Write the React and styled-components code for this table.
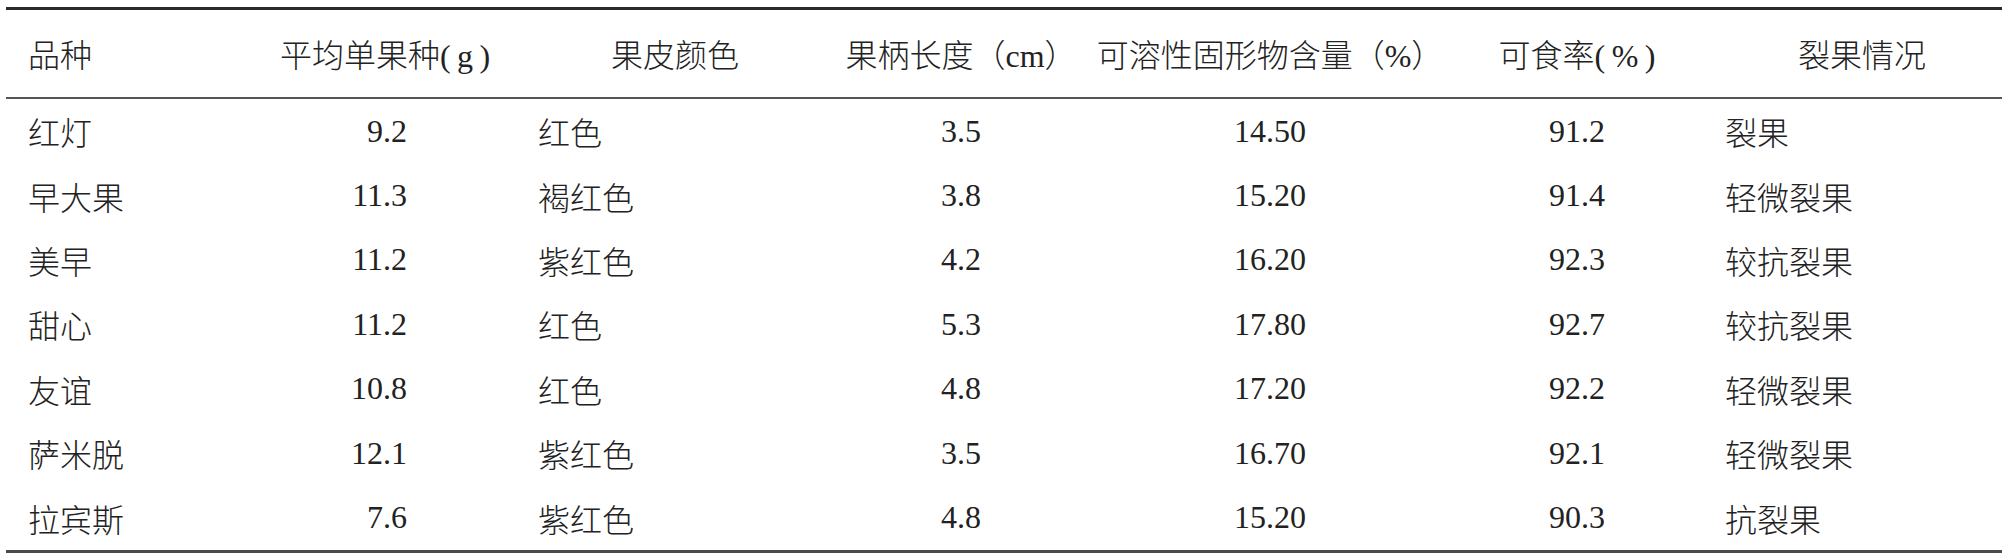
import React from 'react';
import styled, { createGlobalStyle } from 'styled-components';

const GlobalStyle = createGlobalStyle`
  html, body {
    margin: 0;
    padding: 0;
    background: #ffffff;
  }
  body {
    font-family: "Liberation Serif", "Noto Sans CJK SC", serif;
    color: #222222;
  }
`;

const COLS = '244px 270px 310px 262px 356px 258px 296px';

const Sheet = styled.div`
  width: 1996px;
  margin: 7px 0 0 6px;
  border-top: 3px solid #2a2a2a;
  border-bottom: 3px solid #4a4a4a;
`;

const Row = styled.div`
  display: grid;
  grid-template-columns: ${COLS};
  height: ${props => (props.$head ? '85px' : '64.4px')};
  padding-bottom: ${props => (props.$head ? '2px' : '0')};
  border-bottom: ${props => (props.$head ? '2px solid #555555' : 'none')};
`;

const justify = { left: 'flex-start', center: 'center', right: 'flex-end' };

const Cell = styled.div`
  display: flex;
  align-items: center;
  justify-content: ${props => justify[props.$align]};
  padding: 0 ${props => props.$pr || 0}px 0 ${props => props.$pl || 0}px;
  font-size: 32px;
  font-weight: 300;
  white-space: nowrap;
`;

// alignment of each column: header and body
const columns = [
  { head: { align: 'left', pl: 22 }, body: { align: 'left', pl: 22 } },
  { head: { align: 'center' }, body: { align: 'right', pr: 113 } },
  { head: { align: 'center' }, body: { align: 'left', pl: 18 } },
  { head: { align: 'center' }, body: { align: 'center' } },
  { head: { align: 'center' }, body: { align: 'center' } },
  { head: { align: 'center' }, body: { align: 'center' } },
  { head: { align: 'center', pl: 16 }, body: { align: 'left', pl: 19 } },
];

const headers = [
  '平均单果种(\u2009g\u2009)',
  '果皮颜色',
  '果柄长度（cm）',
  '可溶性固形物含量（%）',
  '可食率(\u2009%\u2009)',
  '裂果情况',
];

const rows = [
  ['红灯', '9.2', '红色', '3.5', '14.50', '91.2', '裂果'],
  ['早大果', '11.3', '褐红色', '3.8', '15.20', '91.4', '轻微裂果'],
  ['美早', '11.2', '紫红色', '4.2', '16.20', '92.3', '较抗裂果'],
  ['甜心', '11.2', '红色', '5.3', '17.80', '92.7', '较抗裂果'],
  ['友谊', '10.8', '红色', '4.8', '17.20', '92.2', '轻微裂果'],
  ['萨米脱', '12.1', '紫红色', '3.5', '16.70', '92.1', '轻微裂果'],
  ['拉宾斯', '7.6', '紫红色', '4.8', '15.20', '90.3', '抗裂果'],
];

export default function App() {
  const head = ['品种', ...headers];
  return (
    <>
      <GlobalStyle />
      <Sheet>
        <Row $head>
          {head.map((h, i) => (
            <Cell key={h} $align={columns[i].head.align} $pl={columns[i].head.pl} $pr={columns[i].head.pr}>
              {h}
            </Cell>
          ))}
        </Row>
        {rows.map(r => (
          <Row key={r[0]}>
            {r.map((v, i) => (
              <Cell key={i} $align={columns[i].body.align} $pl={columns[i].body.pl} $pr={columns[i].body.pr}>
                {v}
              </Cell>
            ))}
          </Row>
        ))}
      </Sheet>
    </>
  );
}
